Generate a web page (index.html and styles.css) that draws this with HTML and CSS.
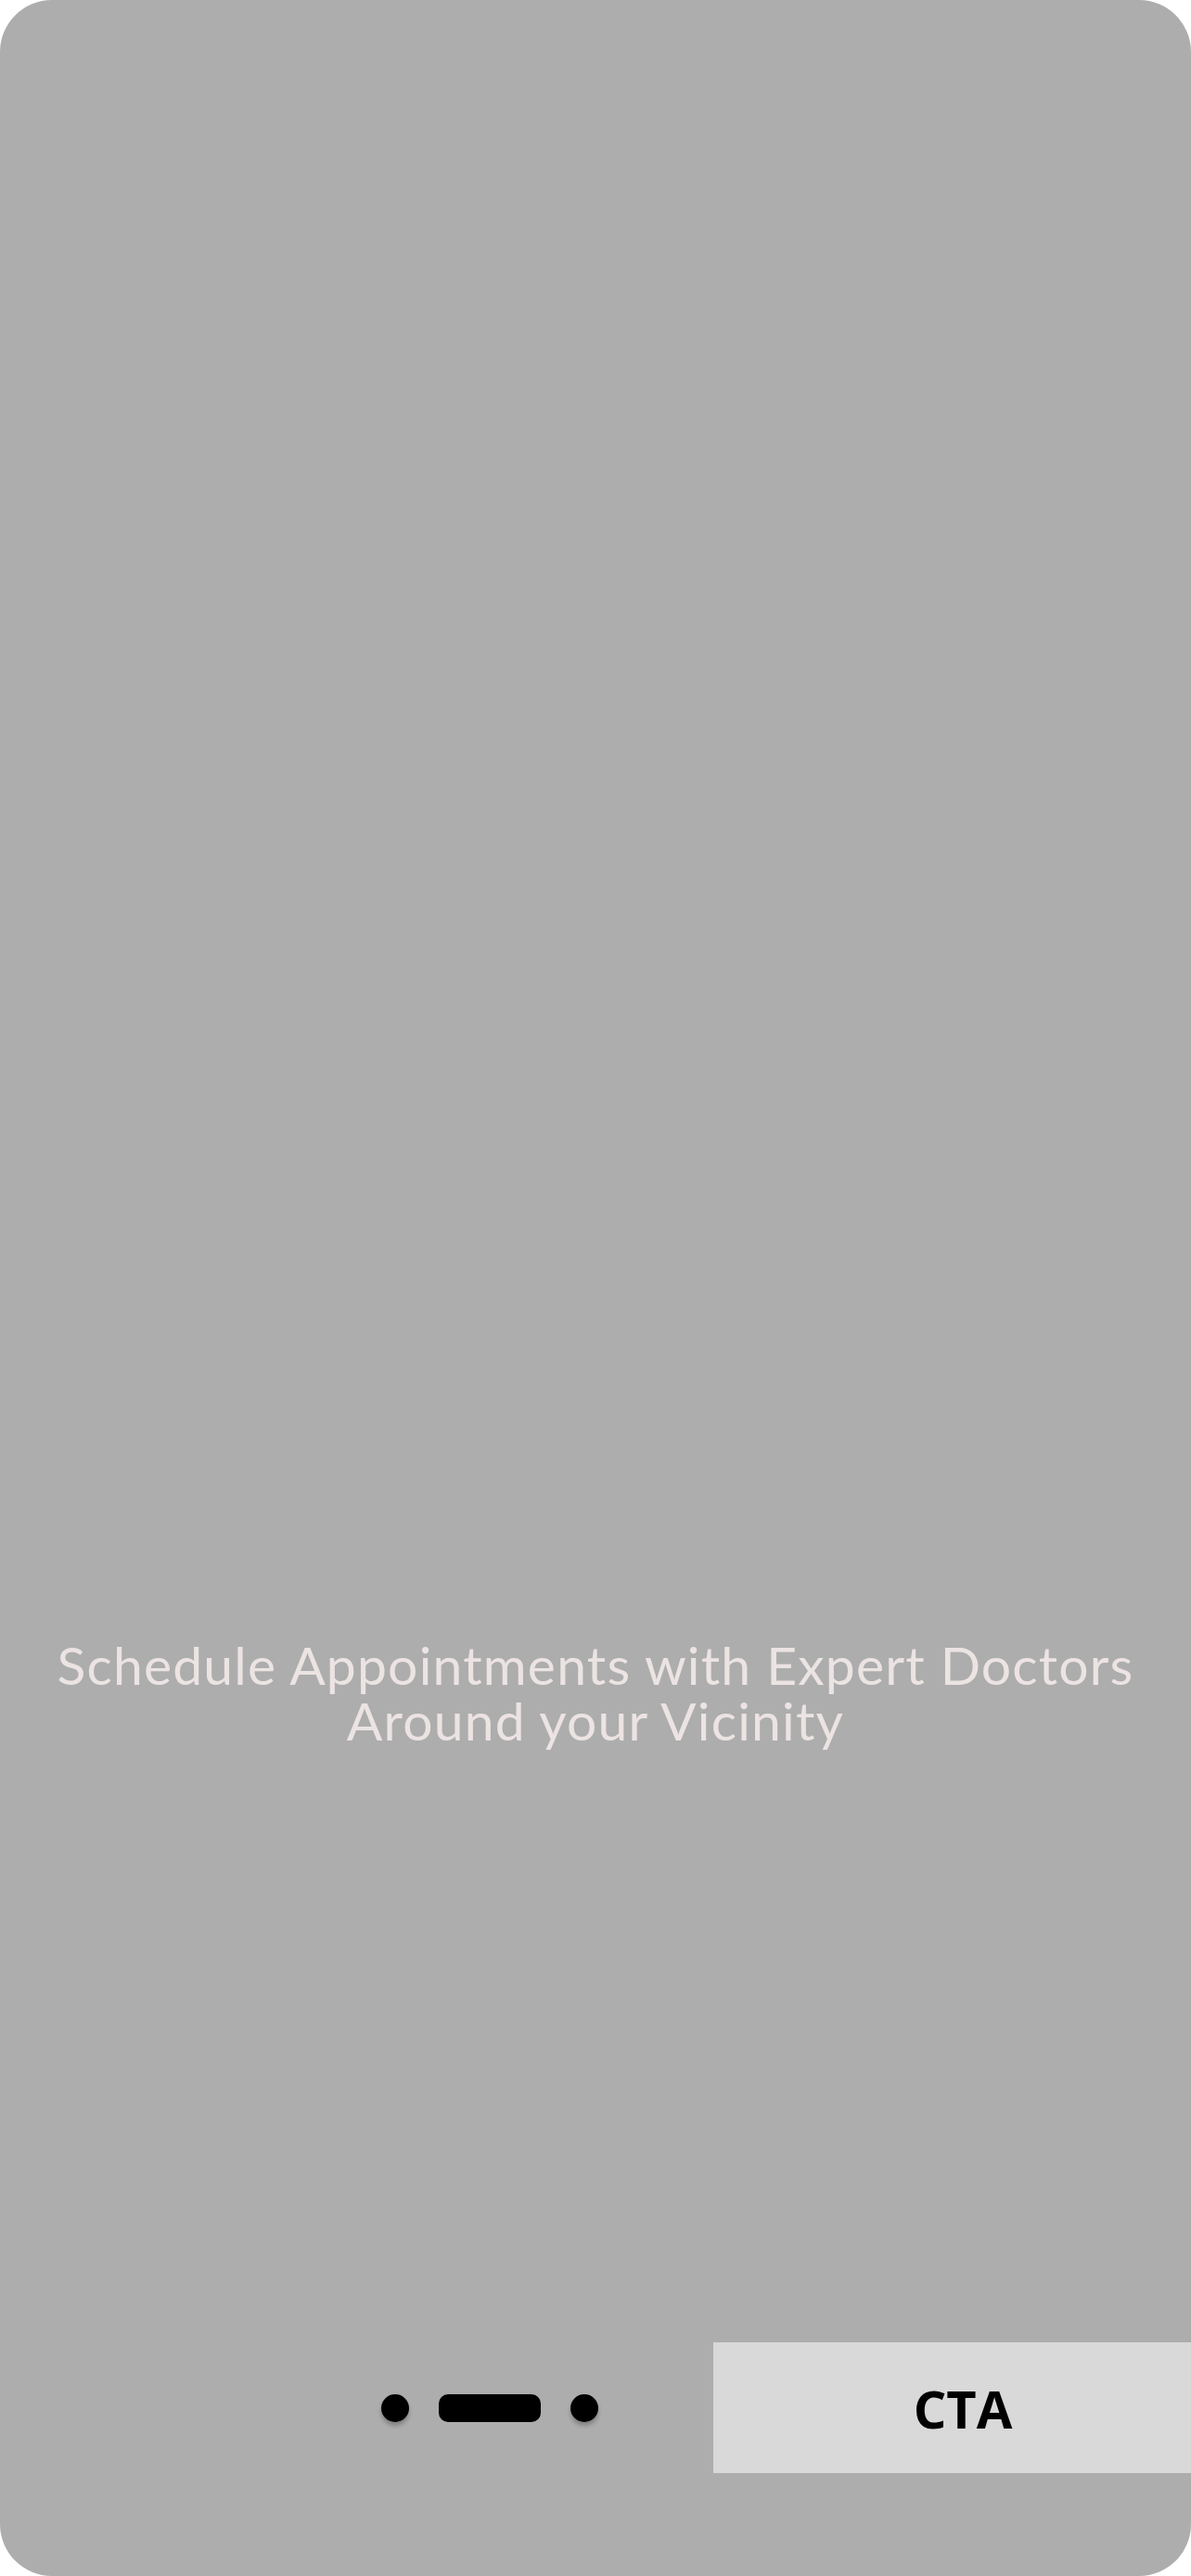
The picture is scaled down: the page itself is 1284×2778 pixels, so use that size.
FILE: index.html
```html
<!DOCTYPE html>
<html lang="en">
<head>
<meta charset="utf-8">
<title>Onboarding</title>
<link rel="stylesheet" href="styles.css">
</head>
<body>
<main class="screen">
  <section class="hero">
    <h1 class="headline">Schedule Appointments with Expert Doctors<br>Around your Vicinity</h1>
  </section>
  <footer class="footer">
    <div class="pager">
      <span class="dot"></span>
      <span class="dot dot-active"></span>
      <span class="dot"></span>
    </div>
    <button class="cta" type="button">CTA</button>
  </footer>
</main>
</body>
</html>
```

FILE: styles.css
```css
html, body {
  margin: 0;
  padding: 0;
  background: #ffffff;
}

.screen {
  width: 1284px;
  height: 2778px;
  background: #adadad;
  border-radius: 56px;
  overflow: hidden;
  display: flex;
  flex-direction: column;
  box-sizing: border-box;
}

.hero {
  flex: 1;
  padding-top: 1765px;
}

.headline {
  margin: 0;
  font-family: Lato, "Open Sans", sans-serif;
  font-weight: 400;
  font-size: 57px;
  line-height: 60px;
  letter-spacing: 1.2px;
  text-align: center;
  color: #ece3e3;
}

.footer {
  display: flex;
  align-items: center;
  gap: 124px;
  padding-left: 411px;
  padding-bottom: 111px;
}

.pager {
  display: flex;
  align-items: center;
  gap: 32px;
  flex-shrink: 0;
}

.dot {
  display: block;
  width: 30px;
  height: 30px;
  border-radius: 50%;
  background: #000000;
  box-shadow: 0 4px 4px rgba(0, 0, 0, 0.25);
}

.dot-active {
  width: 110px;
  border-radius: 10px;
  box-shadow: none;
}

.cta {
  flex-shrink: 0;
  width: 538px;
  height: 141px;
  border: 0;
  margin: 0;
  padding: 0;
  background: #d9d9d9;
  color: #000000;
  font-family: "Open Sans", Lato, sans-serif;
  font-weight: 700;
  font-size: 56px;
  line-height: 1;
}
```
